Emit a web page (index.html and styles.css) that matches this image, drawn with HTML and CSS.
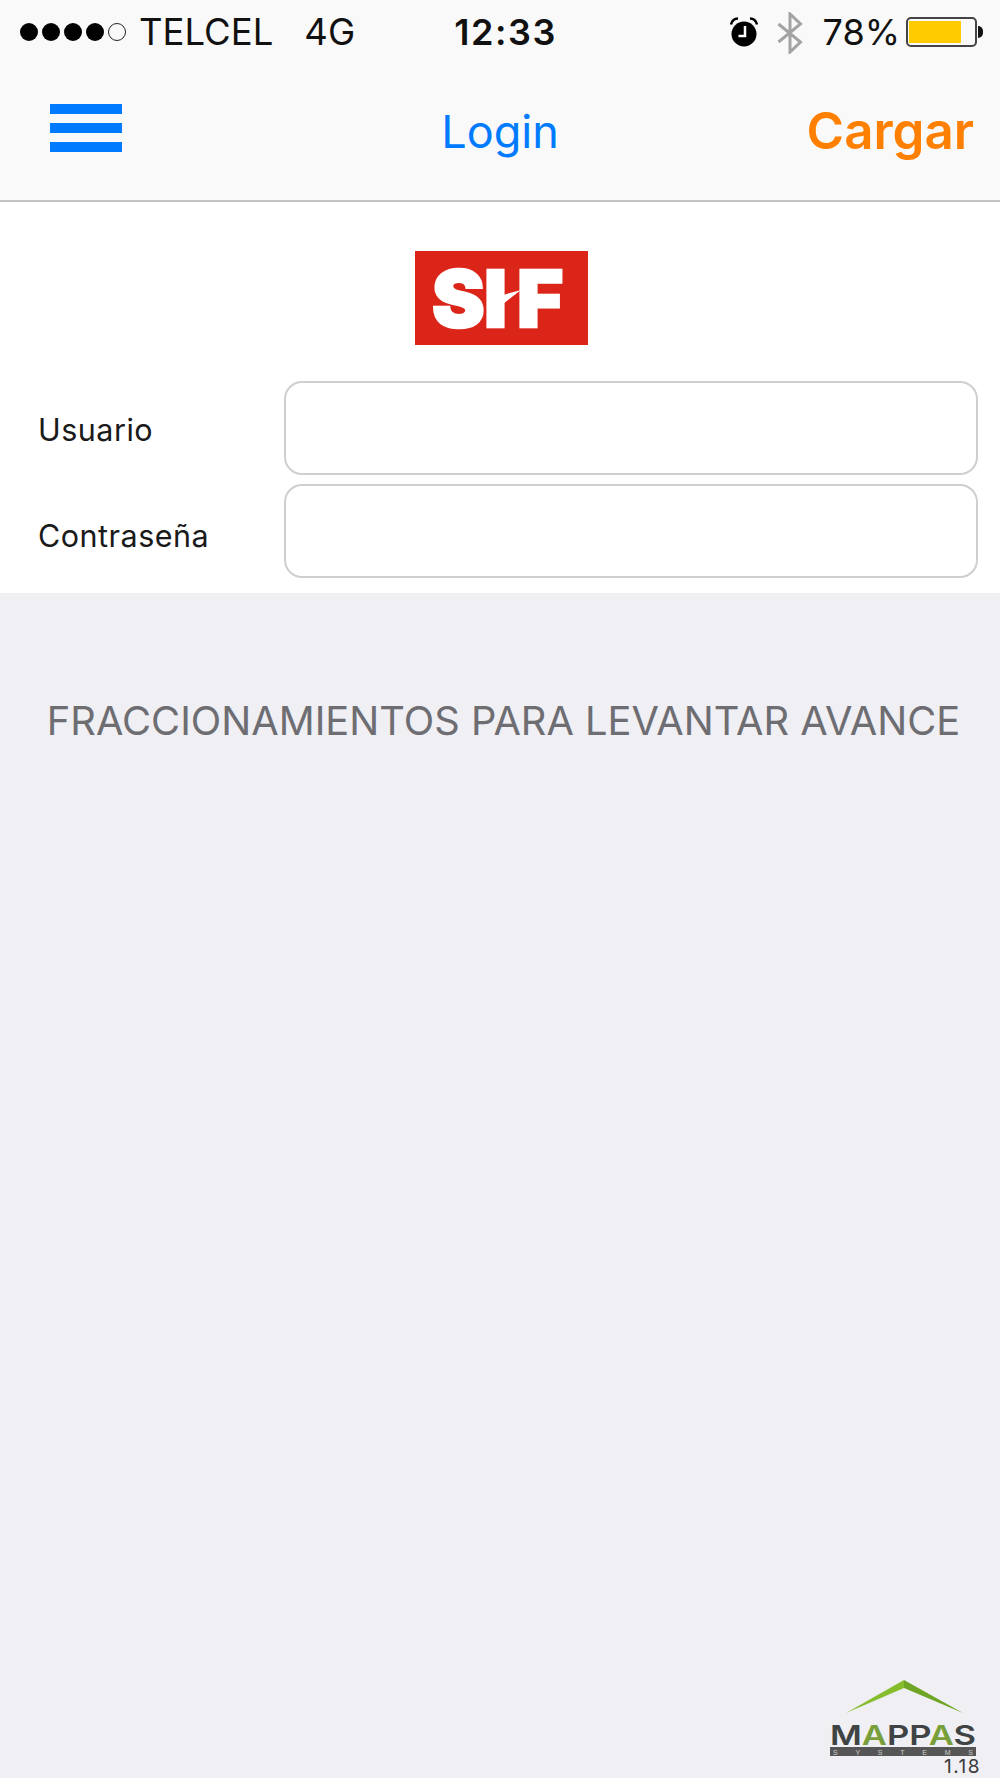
FILE: index.html
```html
<!DOCTYPE html>
<html lang="es">
<head>
<meta charset="utf-8">
<title>Login</title>
<link rel="stylesheet" href="styles.css">
</head>
<body>
<div class="screen">
  <header class="top">
    <div class="status">
      <div class="signal"><i></i><i></i><i></i><i></i><i class="off"></i></div>
      <span class="carrier">TELCEL</span>
      <span class="net">4G</span>
      <span class="clock">12:33</span>
      <div class="status-right">
        <svg class="alarm" width="32" height="32" viewBox="0 0 32 32"><circle cx="16" cy="18" r="12.500" fill="#000"/><path d="M3 8.500 Q4.500 2.500 10 2.500 M29 8.500 Q27.500 2.500 22 2.500" fill="none" stroke="#000" stroke-width="2.500"/><path d="M17 10 V20 H10.500" fill="none" stroke="#fff" stroke-width="2.500"/></svg>
        <svg class="bt" width="26" height="42" viewBox="0 0 26 42"><path d="M1.500 12 L23.500 30 L13 40 V2 L23.500 12 L1.500 30" fill="none" stroke="#a3a3a3" stroke-width="3"/></svg>
        <span class="pct">78%</span>
        <div class="battery"><div class="cell"><div class="fill"></div></div><div class="nub"></div></div>
      </div>
    </div>
    <nav class="nav">
      <div class="burger"><i></i><i></i><i></i></div>
      <span class="title">Login</span>
      <span class="action">Cargar</span>
    </nav>
  </header>
  <section class="form">
    <svg class="sif" width="173" height="94" viewBox="0 0 173 94">
      <rect width="173" height="94" fill="#dc2519"/>
      <text x="17 69 102" y="76" class="sif-text">SIF</text>
      <path d="M88 44 L106 39 L88 53 Z" fill="#fff"/>
    </svg>
    <div class="row"><label class="label">Usuario</label><div class="input"></div></div>
    <div class="row row-2"><label class="label">Contraseña</label><div class="input"></div></div>
  </section>
  <main class="list">
    <h1 class="heading">FRACCIONAMIENTOS PARA LEVANTAR AVANCE</h1>
    <footer class="brand">
      <svg class="mappas" width="150" height="80" viewBox="0 0 150 80">
        <path d="M18 36 L76 3 L76 11 Z" fill="#86bd2c"/>
        <path d="M135 36 L76 3 L76 11 Z" fill="#6fa524"/>
        <text x="75" y="68" text-anchor="middle" class="mappas-text" textLength="146" lengthAdjust="spacingAndGlyphs">M<tspan class="mappas-a">A</tspan>PP<tspan class="mappas-a">A</tspan>S</text>
        <rect x="2" y="70" width="146" height="9" fill="#565656"/>
        <text x="75" y="77.500" text-anchor="middle" class="systems-text" textLength="140">SYSTEMS</text>
      </svg>
      <span class="version">1.18</span>
    </footer>
  </main>
</div>
</body>
</html>
```
FILE: styles.css
```css
* { box-sizing: border-box; }
html, body { margin: 0; padding: 0; }
body { background: #fff; font-family: Inter, "Noto Sans", sans-serif; }
.screen { width: 1000px; height: 1778px; display: flex; flex-direction: column; }

.top { height: 202px; background: #f9f9f9; border-bottom: 2px solid #c4c4c4; flex: none; }
.status { height: 64px; display: flex; align-items: center; padding: 0 0 0 20px; color: #111; position: relative; }
.signal { display: flex; gap: 4px; align-items: center; }
.signal i { width: 18px; height: 18px; border-radius: 50%; background: #000; display: block; }
.signal i.off { background: none; border: 1.500px solid #222; }
.carrier { font-size: 36.500px; margin-left: 13px; }
.net { font-size: 36.500px; margin-left: 31px; }
.clock { font-size: 36px; font-weight: 600; letter-spacing: 1.600px; margin-left: 99px; }
.status-right { margin-left: auto; display: flex; align-items: center; padding-right: 17px; }
.alarm { margin-right: 17px; }
.bt { margin-right: 20px; margin-top: 1px; }
.pct { font-size: 36px; margin-right: 6px; }
.battery { display: flex; align-items: center; }
.cell { width: 71px; height: 30px; border: 2px solid #444; border-radius: 5px; padding: 2px 0 2px 1px; }
.fill { width: 52px; height: 100%; background: #ffcc00; }
.nub { width: 5px; height: 12px; background: #111; border-radius: 0 6px 6px 0; margin-left: 1px; }

.nav { height: 136px; display: flex; align-items: flex-start; position: relative; }
.burger { width: 72px; margin: 40px 0 0 50px; display: flex; flex-direction: column; gap: 9px; }
.burger i { display: block; height: 10px; background: #007aff; }
.title { position: absolute; left: 0; right: 0; top: 43px; text-align: center; font-size: 45px; line-height: 50px; color: #007aff; }
.action { margin: 42px 26px 0 auto; font-size: 51px; line-height: 50px; font-weight: 600; color: #ff7f00; }

.form { height: 391px; flex: none; background: #fff; padding: 49px 22px 0 38px; display: flex; flex-direction: column; }
.sif { align-self: center; margin-right: 14px; display: block; margin-bottom: 36px; overflow: visible; }
.sif-text { font-family: Inter, sans-serif; font-size: 79px; font-weight: 900; fill: #fff; stroke: #fff; stroke-width: 2.500px; }
.row { display: flex; align-items: center; }
.row-2 { margin-top: 9px; }
.label { width: 246px; font-size: 30.500px; letter-spacing: 0.500px; color: #1a1a1a; padding-top: 3px; }
.row-2 .label { padding-top: 9px; }
.input { flex: 1; height: 94px; border: 2px solid #cfcfcf; border-radius: 18px; background: #fff; }

.list { flex: 1; background: #efeff4; display: flex; flex-direction: column; }
.heading { margin: 105px 0 0; padding-left: 7px; text-align: center; font-size: 39.800px; line-height: 46px; font-weight: 400; color: #6d6d72; }
.brand { margin-top: auto; align-self: flex-end; padding: 0 21px 1px 0; display: flex; flex-direction: column; align-items: flex-end; }
.mappas { display: block; margin-right: 1px; }
.mappas-text { font-family: Inter, sans-serif; font-size: 27.500px; font-weight: 600; fill: #3f4343; }
.mappas-a { fill: #7a9f3a; }
.systems-text { font-family: "Liberation Sans", sans-serif; font-size: 7px; fill: #cfcfcf; }
.version { font-size: 19px; line-height: 20px; letter-spacing: 1.500px; color: #3a3a3a; margin-right: -2px; }
```
